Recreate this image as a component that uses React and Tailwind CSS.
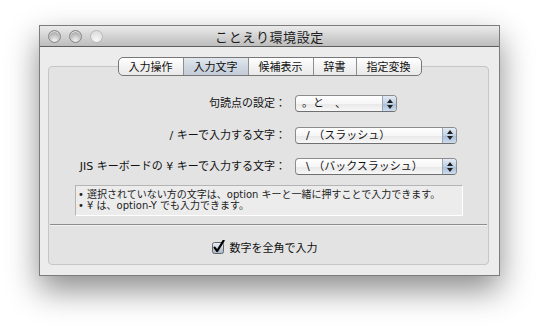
import React from "react";

const tabs = ["入力操作", "入力文字", "候補表示", "辞書", "指定変換"];

const rows = [
  { label: "句読点の設定：", value: "。と　、", w: "w-[102px]", pad: "pl-[6px]" },
  { label: "/ キーで入力する文字：", value: "/ （スラッシュ）", w: "w-[162px]", pad: "pl-[10px]" },
  { label: "JIS キーボードの ¥ キーで入力する文字：", value: "\\ （バックスラッシュ）", w: "w-[162px]", pad: "pl-[10px]" },
];

const Light = ({ dim }) => (
  <div
    className={
      dim
        ? "w-[13px] h-[13px] rounded-full border border-[#b9b9b9] bg-[radial-gradient(circle_at_50%_80%,#f7f7f7,#d6d6d6)]"
        : "w-[13px] h-[13px] rounded-full border border-[#868686] bg-[radial-gradient(circle_at_50%_85%,#f2f2f2,#a9a9a9_75%)] shadow-[inset_0_1px_1px_rgba(255,255,255,0.7)]"
    }
  />
);

const PopupButton = ({ value, w, pad }) => (
  <div
    className={`${w} h-[17px] flex rounded-[4px] border border-[#8c8c8c] border-b-[#6f6f6f] bg-[linear-gradient(#ffffff,#f6f6f6_50%,#e9e9e9_55%,#f7f7f7)] overflow-hidden`}
  >
    <div className={`${pad} flex-1 text-[11px] leading-[15px] text-[#111] whitespace-nowrap`}>
      {value}
    </div>
    <div className="w-[14px] flex flex-col items-center justify-center gap-[2px] border-l border-[#9aa6b4] bg-[linear-gradient(#e4ecf6,#bfd0e4_50%,#a9bfd9_55%,#cddcee)]">
      <svg width="6" height="4" viewBox="0 0 6 4">
        <path d="M3 0 L6 4 L0 4 Z" fill="#1e1e1e" />
      </svg>
      <svg width="6" height="4" viewBox="0 0 6 4">
        <path d="M0 0 L6 0 L3 4 Z" fill="#1e1e1e" />
      </svg>
    </div>
  </div>
);

const App = () => {
  return (
    <div className="w-[539px] h-[330px] bg-white pt-[25px] pl-[39px] font-['DejaVu_Sans','Noto_Sans_CJK_JP',sans-serif] text-[#111]">
      <div className="w-[461px] h-[251px] flex flex-col border border-[#7c7c7c] bg-[#ececec] shadow-[0_14px_30px_rgba(0,0,0,0.45)]">
        {/* title bar */}
        <div className="h-[21px] shrink-0 grid grid-cols-[1fr_auto_1fr] items-center border-b border-[#5f5f5f] bg-[linear-gradient(#ebebeb,#d3d3d3_50%,#bdbdbd)]">
          <div className="flex items-center gap-[8px] pl-[8px]">
            <Light />
            <Light />
            <Light dim />
          </div>
          <div className="text-[13px] leading-[21px] tracking-[0.6px] text-[#1c1c1c] font-['Noto_Sans_CJK_JP',sans-serif]">
            ことえり環境設定
          </div>
          <div />
        </div>

        {/* content */}
        <div className="flex-1 flex flex-col pt-[10px] pl-[8px] pr-[10px] pb-[10px]">
          <div className="relative z-10 flex justify-center pl-[2px]">
            <div className="flex h-[19px] rounded-[5px] border border-[#777] bg-[linear-gradient(#ffffff,#f3f3f3_50%,#e9e9e9)] overflow-hidden">
              {tabs.map((t, i) => (
                <div
                  key={t}
                  className={
                    (i > 0 ? "border-l border-[#8e8e8e] " : "") +
                    (i === 1
                      ? "bg-[linear-gradient(#e3e8ee,#cfd7e1_50%,#c3ccd8)] "
                      : "") +
                    "px-[10px] text-[11px] leading-[17px] text-[#111] font-['Noto_Sans_CJK_JP',sans-serif]"
                  }
                >
                  {t}
                </div>
              ))}
            </div>
          </div>

          <div className="mt-[-10px] flex-1 flex flex-col rounded-[4px] border border-[#c6c6c6] bg-[#e3e3e3] pt-[28px]">
            <div className="flex flex-col gap-[14.5px]">
              {rows.map((r) => (
                <div key={r.label} className="flex items-center h-[17px]">
                  <div className="w-[237px] text-right text-[11px] leading-[17px] whitespace-nowrap">
                    {r.label}
                  </div>
                  <div className="ml-[9px]">
                    <PopupButton value={r.value} w={r.w} pad={r.pad} />
                  </div>
                </div>
              ))}
            </div>

            <div className="ml-[26px] mt-[10px] w-[388px] h-[31px] border border-[#b4b4b4] border-b-white border-r-white bg-[#ececec] pt-[3px] pl-[2px] text-[10px] leading-[11px] text-[#222] whitespace-nowrap">
              <div>• 選択されていない方の文字は、option キーと一緒に押すことで入力できます。</div>
              <div>• ¥ は、option-Y でも入力できます。</div>
            </div>

            <div className="mt-[8px] mx-[1px] h-[2px] border-t border-[#8d8d8d] border-b border-b-[#f2f2f2]" />

            <div className="flex-1 flex items-center justify-center gap-[5px] pr-[8px] pt-[4px]">
              <svg width="13" height="14" viewBox="0 0 13 14">
                <defs>
                  <linearGradient id="cb" x1="0" y1="0" x2="0" y2="1">
                    <stop offset="0" stopColor="#eef2f7" />
                    <stop offset="0.5" stopColor="#c9d3df" />
                    <stop offset="1" stopColor="#a9b6c6" />
                  </linearGradient>
                </defs>
                <rect x="0.5" y="2.5" width="11" height="11" rx="2" fill="url(#cb)" stroke="#5e6670" />
                <path d="M2.6 7.6 L5.2 11 L11.6 0.6" fill="none" stroke="#000" strokeWidth="2.2" strokeLinecap="round" strokeLinejoin="round" />
              </svg>
              <div className="text-[11px] leading-[14px] font-['Noto_Sans_CJK_JP',sans-serif]">数字を全角で入力</div>
            </div>
          </div>
        </div>
      </div>
    </div>
  );
};

export default App;
